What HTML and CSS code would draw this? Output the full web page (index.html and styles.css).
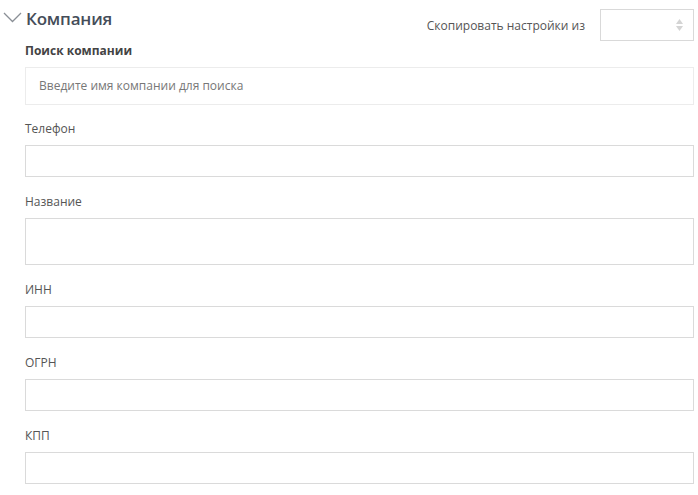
FILE: index.html
```html
<!DOCTYPE html>
<html lang="ru">
<head>
<meta charset="utf-8">
<link rel="stylesheet" href="styles.css">
</head>
<body>
<section class="panel">
  <header class="head">
    <div class="title">
      <svg class="chev" width="20" height="12" viewBox="0 0 20 12"><polyline points="1,1 9.5,9.5 18,1" fill="none" stroke="#8a8f96" stroke-width="1.3"/></svg>
      <span class="title-text">Компания</span>
    </div>
    <div class="copy">
      <span class="copy-label">Скопировать настройки из</span>
      <div class="select">
        <svg class="spin" width="7" height="12" viewBox="0 0 7 12"><path d="M3.5 0 L7 5 L0 5 Z" fill="#d4d4d4"/><path d="M0 7 L7 7 L3.5 12 Z" fill="#d4d4d4"/></svg>
      </div>
    </div>
  </header>
  <div class="body">
    <div class="field search">
      <label class="label bold">Поиск компании</label>
      <div class="input search-input">Введите имя компании для поиска</div>
    </div>
    <div class="field">
      <label class="label">Телефон</label>
      <div class="input"></div>
    </div>
    <div class="field">
      <label class="label">Название</label>
      <div class="input tall"></div>
    </div>
    <div class="field">
      <label class="label">ИНН</label>
      <div class="input"></div>
    </div>
    <div class="field">
      <label class="label">ОГРН</label>
      <div class="input"></div>
    </div>
    <div class="field">
      <label class="label">КПП</label>
      <div class="input"></div>
    </div>
  </div>
</section>
</body>
</html>
```
FILE: styles.css
```css
* { box-sizing: border-box; }
html, body { margin: 0; padding: 0; background: #fff; }
body {
  font-family: "Open Sans", "Noto Sans", sans-serif;
  font-size: 12px;
  color: #555;
}
.panel { width: 698px; padding: 0 4px 0 0; }
.head {
  display: flex;
  justify-content: space-between;
  align-items: flex-start;
  height: 42px;
  padding-top: 9px;
}
.title {
  display: flex;
  align-items: center;
  margin-top: -2px;
  font-size: 17px;
  line-height: 24px;
  color: #454d59;
  font-weight: 600;
}
.title-text { letter-spacing: -0.2px; }
.chev { margin: 0 3px 0 3px; position: relative; top: -1px; }
.copy { display: flex; align-items: center; }
.copy-label { color: #555; font-size: 12px; margin-right: 15px; margin-top: 1px; }
.select {
  width: 94px;
  height: 32px;
  border: 1px solid #d9d9d9;
  display: flex;
  justify-content: flex-end;
  align-items: center;
  padding-right: 10px;
}
.body { padding-left: 25px; }
.field { margin-bottom: 16px; }
.field.search { margin-bottom: 15px; }
.label { display: block; line-height: 17px; margin-bottom: 8px; color: #555; }
.label.bold { font-weight: 700; color: #444; margin-bottom: 8px; }
.input {
  height: 32px;
  border: 1px solid #dadada;
  background: #fff;
}
.input.tall { height: 47px; }
.search-input {
  height: 38px;
  border-color: #ececec;
  padding-left: 13px;
  line-height: 36px;
  color: #777;
}
```
